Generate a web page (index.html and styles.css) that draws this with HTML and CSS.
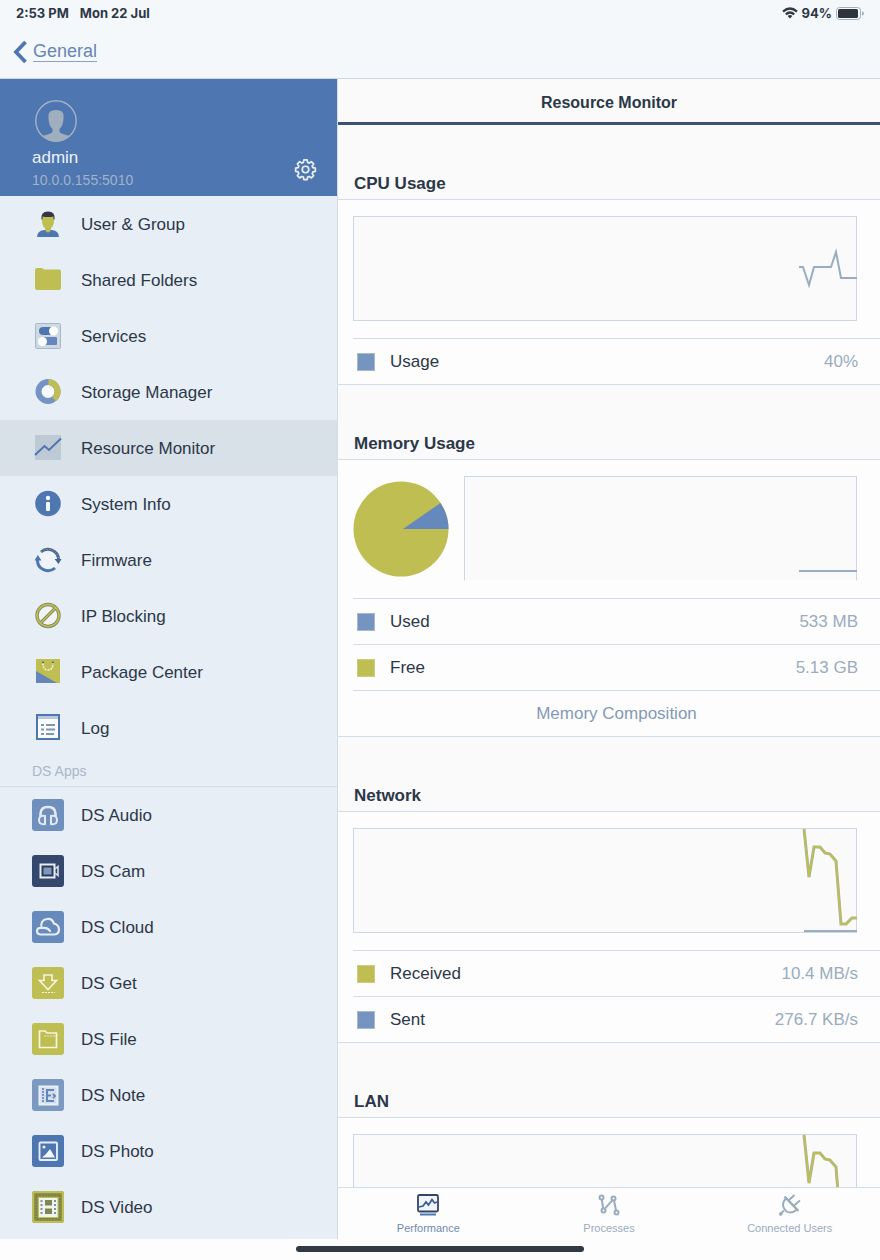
FILE: index.html
```html
<!DOCTYPE html>
<html lang="en">
<head>
<meta charset="utf-8">
<meta name="viewport" content="width=device-width, initial-scale=1">
<title>Resource Monitor</title>
<link rel="stylesheet" href="styles.css">
</head>
<body>
<header class="topbar">
  <div class="status">
    <span>2:53 PM</span>
    <span>Mon 22 Jul</span>
    <span class="status-right">
      <svg class="wifi" viewBox="0 0 16 12" aria-hidden="true"><g fill="none" stroke="#2f3844" stroke-width="2.2"><path d="M1 4.6Q8-1.6 15 4.6"/><path d="M3.8 7.4Q8 3.6 12.2 7.4"/></g><path d="M5.6 9Q8 7 10.4 9L8 11.6Z" fill="#2f3844"/></svg>
      <span>94%</span>
      <svg class="battery" viewBox="0 0 28 13" aria-hidden="true"><rect x=".5" y=".5" width="24" height="12" rx="3" fill="#f4f7fb" stroke="#9fb0c0"/><rect x="2" y="2" width="20" height="9" rx="1.5" fill="#2f343a"/><path d="M26 4.5q2 0 2 2t-2 2z" fill="#9fb0c0"/></svg>
    </span>
  </div>
  <nav class="back">
    <a class="back-link" href="#general">
      <svg class="chevron" viewBox="0 0 14 24" aria-hidden="true"><path d="M12.500 2L3 12L12.500 22" fill="none" stroke="#4e76b1" stroke-width="3.800"/></svg>
      <span class="back-text">General</span>
    </a>
  </nav>
</header>

<div class="layout">
  <aside class="sidebar">
    <div class="profile">
      <svg class="avatar" viewBox="0 0 42 42" aria-hidden="true"><circle cx="21" cy="21" r="20.2" fill="none" stroke="#a3b3c3" stroke-width="1.4"/><path d="M13.500 16Q13 10 21 10T28.500 16V19Q28 26 24.500 29V32Q26 34 35 36Q29 41.500 21 41.500T7 36Q16 34 17.500 32V29Q14 26 13.500 19Z" fill="#a0afbe"/></svg>
      <div class="profile-row">
        <div>
          <div class="profile-name">admin</div>
          <div class="profile-host">10.0.0.155:5010</div>
        </div>
        <button class="settings" type="button" aria-label="Settings">
          <svg viewBox="0 0 24 24" aria-hidden="true"><g fill="none" stroke="#e9eff6" stroke-width="1.8" stroke-linejoin="round"><path d="M10.300 2h3.400l.5 2.600 1.700.7 2.200-1.500 2.400 2.400-1.500 2.200.7 1.700 2.600.5v3.400l-2.600.5-.7 1.700 1.500 2.200-2.400 2.400-2.200-1.500-1.700.7-.5 2.600h-3.400l-.5-2.600-1.700-.7-2.200 1.500-2.400-2.400 1.500-2.200-.7-1.700-2.600-.5v-3.400l2.600-.5.7-1.700L3.500 6.200l2.400-2.400 2.200 1.500 1.700-.7z"/><circle cx="12" cy="12" r="3.400"/></g></svg>
        </button>
      </div>
    </div>
    <nav class="menu">
      <a class="item" href="#users"><svg viewBox="0 0 32 32" aria-hidden="true"><path d="M5 29Q5 23 12 22H20Q27 23 27 29Z" fill="#4e76b1"/><path d="M10 7H22V12Q22 18 19 20V22Q16 27 13 22V20Q10 18 10 12Z" fill="#bfbe52"/><path d="M9.500 11.500Q8.500 3.500 16 3.500T22.500 11.500H21.500V8.500Q16 9.500 10.500 8.500V11.500Z" fill="#2f3844"/></svg>User &amp; Group</a>
      <a class="item" href="#folders"><svg viewBox="0 0 32 32" aria-hidden="true"><path d="M3 6Q3 4 5 4H9.500Q11 4 12 5.500H27Q29 5.500 29 7.500V24Q29 26 27 26H5Q3 26 3 24Z" fill="#bfbe52"/></svg>Shared Folders</a>
      <a class="item" href="#services"><svg viewBox="0 0 32 32" aria-hidden="true"><rect x="3.500" y="3.500" width="25" height="25" rx="1" fill="#cfd9e4" stroke="#a9b8c8"/><rect x="7" y="7" width="15" height="8" rx="4" fill="#4e76b1"/><circle cx="21.500" cy="11" r="4.500" fill="#fff"/><rect x="10" y="17" width="15" height="8" rx="1" fill="#6587bd"/><circle cx="10.500" cy="21.500" r="4.500" fill="#fff"/></svg>Services</a>
      <a class="item" href="#storage"><svg viewBox="0 0 32 32" aria-hidden="true"><circle cx="16" cy="15.500" r="9.500" fill="#f7f9fc" stroke="#7593c3" stroke-width="6"/><path d="M16.500 6A9.500 9.500 0 0 1 22 23" fill="none" stroke="#bfbe52" stroke-width="6"/></svg>Storage Manager</a>
      <a class="item active" href="#monitor" aria-current="page"><svg viewBox="0 0 32 32" aria-hidden="true"><rect x="3" y="3" width="26" height="25" fill="#bdc9d5"/><path d="M3 23L12.500 14L17 18L29 6.500" fill="none" stroke="#4e76b1" stroke-width="2"/></svg>Resource Monitor</a>
      <a class="item" href="#info"><svg viewBox="0 0 32 32" aria-hidden="true"><circle cx="16" cy="15.500" r="12.800" fill="#4e76b1"/><circle cx="16" cy="10" r="2.200" fill="#f4f7fb"/><rect x="14" y="14" width="4" height="9" rx="1" fill="#f4f7fb"/></svg>System Info</a>
      <a class="item" href="#firmware"><svg viewBox="0 0 32 32" aria-hidden="true"><circle cx="16" cy="16" r="9.500" fill="#f0f4f9"/><g fill="none" stroke-width="3"><path d="M9 8A10.500 10.500 0 0 1 26.500 15" stroke="#47659b"/><path d="M23 24A10.500 10.500 0 0 1 5.500 16" stroke="#4e76b1"/></g><path d="M22.500 15H29.500L26.500 20Z" fill="#46648d"/><path d="M2.500 16.500H9.500L5.800 11Z" fill="#4e76b1"/><path d="M9 8A10.500 10.500 0 0 1 26.500 15" fill="none" stroke="#bfbe52" stroke-dasharray="1 2"/></svg>Firmware</a>
      <a class="item" href="#blocking"><svg viewBox="0 0 32 32" aria-hidden="true"><circle cx="16" cy="15.500" r="11" fill="#f0f4f7" stroke="#858c62" stroke-width="3.400"/><path d="M8.500 23L23.500 8" stroke="#858c62" stroke-width="3.200"/><circle cx="16" cy="15.500" r="11" fill="none" stroke="#bfbe52" stroke-width="1.600"/><path d="M8.500 23L23.500 8" stroke="#bfbe52" stroke-width="1.400"/></svg>IP Blocking</a>
      <a class="item" href="#packages"><svg viewBox="0 0 32 32" aria-hidden="true"><rect x="4" y="3" width="24" height="24" fill="#bfbe52"/><path d="M4 15L25 27H4Z" fill="#6485b9"/><path d="M11 7Q11 14 16 14T21 7" fill="none" stroke="#f4f4d8" stroke-width="1.600" stroke-dasharray="2 1"/><path d="M10 6.500h2M20 6.500h2" stroke="#5d6544" stroke-width="1.400"/></svg>Package Center</a>
      <a class="item" href="#log"><svg viewBox="0 0 32 32" aria-hidden="true"><rect x="5" y="3" width="22" height="24" fill="#fbfcfd" stroke="#4e76b1" stroke-width="2"/><path d="M6 5.500H26" stroke="#bac7d6" stroke-width="3"/><path d="M9 13h3M9 17.500h3M9 22h3M14 13h9M14 17.500h9M14 22h8" stroke="#8097b0" stroke-width="2"/></svg>Log</a>
      <h2 class="menu-head">DS Apps</h2>
      <a class="item" href="#audio"><svg viewBox="0 0 32 32" aria-hidden="true"><rect width="32" height="32" rx="3" fill="#6f8fbd"/><path d="M8.500 19V15Q8.500 8 16 8T23.500 15V19" fill="none" stroke="#e3eaf2" stroke-width="2.600"/><path d="M13 17V25Q7 26 7 21T13 17ZM19 17V25Q25 26 25 21T19 17Z" fill="#7693bd" stroke="#e3eaf2" stroke-width="2"/></svg>DS Audio</a>
      <a class="item" href="#cam"><svg viewBox="0 0 32 32" aria-hidden="true"><rect width="32" height="32" rx="3" fill="#33486c"/><rect x="8.500" y="9.500" width="14" height="13" fill="#273a59" stroke="#e8eef5" stroke-width="2"/><rect x="11.500" y="12.500" width="8" height="7" fill="#7e97bd"/><path d="M23 14L26 11.500V20.500L23 18" fill="none" stroke="#d4deea" stroke-width="1.600"/></svg>DS Cam</a>
      <a class="item" href="#cloud"><svg viewBox="0 0 32 32" aria-hidden="true"><rect width="32" height="32" rx="3" fill="#668abb"/><path d="M9 23.500Q5 23.500 5 20T9.500 17Q8 9 15 8Q20 7 22 12.500Q27 14 27 18.500T22.500 23.500ZM10 17Q16 16 18 20" fill="none" stroke="#e6edf5" stroke-width="2.200" stroke-linecap="round"/></svg>DS Cloud</a>
      <a class="item" href="#get"><svg viewBox="0 0 32 32" aria-hidden="true"><rect width="32" height="32" rx="3" fill="#bfbe52"/><path d="M12 8H20V13.500H24.500L16 22.500L7.500 13.500H12Z" fill="none" stroke="#f4f5e2" stroke-width="1.600"/><path d="M10 25.500H23" stroke="#f4f5e2" stroke-dasharray="2 1"/></svg>DS Get</a>
      <a class="item" href="#file"><svg viewBox="0 0 32 32" aria-hidden="true"><rect width="32" height="32" rx="3" fill="#bfbe52"/><path d="M7.500 8H13L15 10H24.500V24.500H7.500Z" fill="none" stroke="#f4f5e2" stroke-width="1.700"/><path d="M12 13H23" stroke="#e6e7b9" stroke-dasharray="2 1"/></svg>DS File</a>
      <a class="item" href="#note"><svg viewBox="0 0 32 32" aria-hidden="true"><rect width="32" height="32" rx="3" fill="#7c99c2"/><rect x="7.500" y="7.500" width="18" height="18" fill="#d3deea" stroke="#e9eff6" stroke-width="2"/><path d="M11 9V24" stroke="#7896c4" stroke-width="2" stroke-dasharray="2 1"/><path d="M22 11H15V22H22M16 16.500H19M21 15l2 2-2 2" fill="none" stroke="#6285bb" stroke-width="2"/></svg>DS Note</a>
      <a class="item" href="#photo"><svg viewBox="0 0 32 32" aria-hidden="true"><rect width="32" height="32" rx="3" fill="#4e76b1"/><rect x="7.500" y="7.500" width="17.500" height="17.500" rx="1" fill="none" stroke="#e6edf5" stroke-width="1.900"/><path d="M10 22.500L14 19L18 14L23 22.500Z" fill="#f2f6fa"/><circle cx="12" cy="12" r="1.600" fill="#e6edf5"/></svg>DS Photo</a>
      <a class="item" href="#video"><svg viewBox="0 0 32 32" aria-hidden="true"><rect width="32" height="32" rx="3" fill="#8e924c"/><rect x="1" y="1" width="30" height="30" rx="2" fill="none" stroke="#bfbe52" stroke-width="2"/><rect x="4" y="4" width="24" height="24" fill="none" stroke="#6d7444" stroke-dasharray="2 1"/><rect x="6.500" y="6.500" width="19.500" height="20" fill="#f1f4ee" stroke="#bfbe52"/><path d="M9.500 9V24M23 9V24" stroke="#7c90aa" stroke-width="2" stroke-dasharray="2 2"/><path d="M13 9h7v5.500h-7zM13 17.500h7V23h-7z" fill="#7f8751"/></svg>DS Video</a>
    </nav>
  </aside>

  <main class="panel">
    <h1 class="panel-title">Resource Monitor</h1>
    <div class="scroll">
      <section>
        <h2 class="section-head">CPU Usage</h2>
        <div class="card">
          <div class="chart-area">
            <div class="chart"><svg class="plot" viewBox="0 0 58 103" aria-hidden="true"><polyline class="line-blue" points="1,50 5,50 11,68 16,50 33,50 38,35 43,61 59,61"/></svg></div>
          </div>
          <dl class="rows">
            <div class="row"><dt class="label"><span class="swatch blue"></span>Usage</dt><dd class="value">40%</dd></div>
          </dl>
        </div>
      </section>
      <section>
        <h2 class="section-head">Memory Usage</h2>
        <div class="card">
          <div class="chart-area">
            <svg class="pie" viewBox="0 0 96 96" aria-hidden="true"><circle cx="48" cy="48" r="47.500" fill="#bfbe52"/><path d="M50 48L87.500 22Q95.500 34 95.500 48Z" fill="#6588bd"/></svg>
            <div class="chart open"><svg class="plot" viewBox="0 0 58 103" aria-hidden="true"><polyline class="line-blue" points="1,94 59,94"/></svg></div>
          </div>
          <dl class="rows">
            <div class="row"><dt class="label"><span class="swatch blue"></span>Used</dt><dd class="value">533 MB</dd></div>
            <div class="row"><dt class="label"><span class="swatch olive"></span>Free</dt><dd class="value">5.13 GB</dd></div>
          </dl>
          <button class="composition" type="button">Memory Composition</button>
        </div>
      </section>
      <section>
        <h2 class="section-head">Network</h2>
        <div class="card">
          <div class="chart-area">
            <div class="chart"><svg class="plot" viewBox="0 0 58 103" aria-hidden="true"><polyline class="line-blue" points="6,102 59,102"/><g class="line-olive"><polyline class="halo" points="6,0 11,48 16,18 22,18 27,24 32,25 38,32 43,95 48,95 54,89 59,89"/><polyline points="6,0 11,48 16,18 22,18 27,24 32,25 38,32 43,95 48,95 54,89 59,89"/></g></svg></div>
          </div>
          <dl class="rows">
            <div class="row"><dt class="label"><span class="swatch olive"></span>Received</dt><dd class="value">10.4 MB/s</dd></div>
            <div class="row"><dt class="label"><span class="swatch blue"></span>Sent</dt><dd class="value">276.7 KB/s</dd></div>
          </dl>
        </div>
      </section>
      <section>
        <h2 class="section-head">LAN</h2>
        <div class="card">
          <div class="chart-area">
            <div class="chart"><svg class="plot" viewBox="0 0 58 103" aria-hidden="true"><g class="line-olive"><polyline class="halo" points="6,0 11,48 16,18 22,18 27,24 32,25 38,32 43,95 48,95 54,89 59,89"/><polyline points="6,0 11,48 16,18 22,18 27,24 32,25 38,32 43,95 48,95 54,89 59,89"/></g></svg></div>
          </div>
        </div>
      </section>
    </div>
    <nav class="tabs">
      <button class="tab selected" type="button"><svg viewBox="0 0 24 24" aria-hidden="true"><rect x="2" y="2" width="20" height="16.500" rx="1.500" fill="#f1f5fa" stroke="#30466d" stroke-width="1.800"/><path d="M3 14L7 13L10 9L12.500 12L16 6.500L18.500 10L21 9" fill="none" stroke="#3d5f96" stroke-width="1.800"/><path d="M4 21.500H20" stroke="#4e76b1" stroke-width="2"/></svg>Performance</button>
      <button class="tab" type="button"><svg viewBox="0 0 24 24" aria-hidden="true"><g fill="none" stroke="#9aacbd" stroke-width="2"><circle cx="4.500" cy="4.500" r="2"/><circle cx="6.500" cy="17.500" r="2"/><circle cx="16.500" cy="5.500" r="2"/><circle cx="19.500" cy="19.500" r="2"/><path d="M4.800 6.500L6.200 15.500M7.700 15.800L15.500 7.200M17 7.500L19 17.500"/></g></svg>Processes</button>
      <button class="tab" type="button"><svg viewBox="0 0 24 24" aria-hidden="true"><g fill="none" stroke="#9aacbd" stroke-width="2"><path d="M8 5L19 16.500Q13 21.500 8 18Q2 12 8 5Z"/><path d="M6.500 3.500L20.500 18M11 7L16.500 2M16 12.500L22 7.500M1.500 22L6 17.500"/></g><circle cx="2.800" cy="21" r="1.800" fill="#9aacbd"/></svg>Connected Users</button>
    </nav>
  </main>
</div>
<footer class="home"><span class="home-bar"></span></footer>
</body>
</html>
```
FILE: styles.css
```css
* { box-sizing: border-box; }
body {
  margin: 0;
  height: 100vh;
  display: flex;
  flex-direction: column;
  overflow: hidden;
  background: #fdfdfe;
  color: #2c3748;
  font-family: "Liberation Sans", Arial, sans-serif;
  font-size: 17px;
}
h1, h2, dl, dd { margin: 0; }
svg { display: block; flex: none; }
a { color: inherit; text-decoration: none; }
button {
  border: 0;
  padding: 0;
  background: none;
  color: inherit;
  font: inherit;
  cursor: pointer;
}

.topbar {
  flex: none;
  background: #f5f8fa;
  border-bottom: 1px solid #ced8e3;
}
.status {
  display: flex;
  align-items: center;
  gap: 11px;
  height: 26px;
  padding: 0 16px;
  font-family: Inter, sans-serif;
  font-size: 13px;
  font-weight: 700;
}
.status-right {
  display: flex;
  align-items: center;
  gap: 4px;
  margin-left: auto;
}
.wifi { width: 16px; height: 12px; }
.battery { width: 28px; height: 13px; }
.back {
  display: flex;
  align-items: center;
  height: 52px;
  padding: 0 13px;
}
.back-link {
  display: flex;
  align-items: center;
  gap: 6px;
  color: #6686b5;
  font-size: 18px;
}
.chevron { width: 14px; height: 24px; }
.back-text { border-bottom: 1px solid #8aa2c5; line-height: 19px; }

.layout { display: flex; flex: 1; min-height: 0; }
.sidebar {
  flex: none;
  width: 338px;
  overflow: hidden;
  background: #e7eef6;
  border-right: 1px solid #d3dde9;
}
.profile {
  height: 117px;
  padding: 21px 20px 0 32px;
  background: #4e76b1;
  color: #edf2f8;
}
.avatar { width: 42px; height: 42px; margin-left: 3px; }
.profile-row { display: flex; justify-content: space-between; align-items: center; }
.profile-name { line-height: 20px; margin-top: 6px; }
.profile-host { line-height: 20px; margin-top: 2px; font-size: 14px; color: #9fb3cc; }
.settings { width: 23px; height: 23px; margin-top: 6px; }
.settings svg { width: 23px; height: 23px; }
.item {
  display: flex;
  align-items: center;
  gap: 17px;
  height: 56px;
  padding: 2px 0 0 32px;
}
.item svg { width: 32px; height: 32px; margin-bottom: 2px; }
.item.active { background: #d8e0e8; }
.menu-head {
  height: 31px;
  padding-left: 32px;
  border-bottom: 1px solid #d3dce6;
  color: #a9b8c7;
  font-size: 14px;
  font-weight: 400;
  line-height: 30px;
}

.panel { display: flex; flex: 1; flex-direction: column; min-width: 0; background: #fafafb; }
.panel-title {
  flex: none;
  height: 46px;
  border-bottom: 3px solid #3a5275;
  font-size: 16px;
  font-weight: 700;
  line-height: 47px;
  text-align: center;
}
.scroll { flex: 1; min-height: 0; overflow-y: auto; scrollbar-width: none; }
.section-head {
  display: flex;
  align-items: flex-end;
  height: 75px;
  padding: 0 16px 5px;
  border-bottom: 1px solid #d3dce9;
  font-size: 17px;
  font-weight: 700;
  line-height: 20px;
}
.card { background: #fdfdfe; border-bottom: 1px solid #d3dce9; }
.chart-area {
  display: flex;
  align-items: center;
  gap: 15px;
  padding: 16px 23px 17px 15px;
}
.chart {
  display: flex;
  justify-content: flex-end;
  flex: 1;
  height: 105px;
  border: 1px solid #cdd8e4;
  background: #fafafa;
}
.chart.open { border-bottom-color: transparent; background-clip: padding-box; }
.plot { width: 58px; height: 103px; overflow: visible; }
.plot polyline { fill: none; stroke-width: 2; }
.line-blue { stroke: #99adc2; }
.line-olive { stroke: #bfbe52; }
.plot .halo { stroke: #a5b3b3; stroke-width: 3; }
.pie { width: 96px; height: 96px; }
.rows { padding-left: 15px; }
.row {
  display: flex;
  align-items: center;
  justify-content: space-between;
  height: 46px;
  padding: 0 22px 0 4px;
  border-top: 1px solid #d3dce9;
}
.label { display: flex; align-items: center; gap: 15px; }
.swatch { width: 18px; height: 18px; border: 1px solid #a9bacc; }
.blue { background: #7594c0; }
.olive { background: #bfbe52; border-color: #c9ca84; }
.value { color: #9aacbd; }
.composition {
  display: block;
  width: calc(100% - 15px);
  height: 46px;
  margin-left: 15px;
  border-top: 1px solid #d3dce9;
  color: #839ab5;
}
.tabs {
  flex: none;
  display: flex;
  height: 52px;
  background: #fdfdfe;
  border-top: 1px solid #d3dce9;
}
.tab {
  flex: 1;
  display: flex;
  flex-direction: column;
  align-items: center;
  justify-content: center;
  gap: 5px;
  color: #9aacbd;
  font-size: 11px;
  line-height: 12px;
}
.tab svg { width: 24px; height: 24px; }
.tab.selected { color: #6f8bb0; }
.home {
  flex: none;
  display: flex;
  justify-content: center;
  height: 21px;
  padding-top: 7px;
}
.home-bar { width: 288px; height: 6px; border-radius: 3px; background: #333a44; }
```
